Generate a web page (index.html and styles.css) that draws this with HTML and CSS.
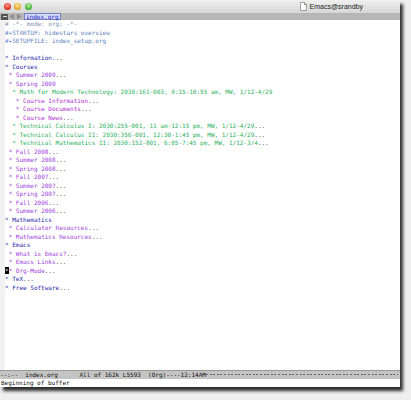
FILE: index.html
```html
<!DOCTYPE html>
<html>
<head>
<meta charset="utf-8">
<link rel="stylesheet" href="styles.css">
</head>
<body>
<div class="window">
  <div class="titlebar">
    <div class="lights">
      <span class="light red"></span>
      <span class="light yellow"></span>
      <span class="light green"></span>
    </div>
    <div class="title">
      <svg class="docicon" width="7" height="9" viewBox="0 0 7 9"><path d="M0.5 0.5 H4.5 L6.5 2.5 V8.5 H0.5 Z" fill="#fff" stroke="#888" stroke-width="0.8"/><path d="M4.5 0.5 V2.5 H6.5" fill="none" stroke="#888" stroke-width="0.8"/></svg>
      <span>Emacs@srandby</span>
    </div>
  </div>
  <div class="tabbar">
    <span class="tbtn minus"></span>
    <svg class="arrow" width="6" height="7" viewBox="0 0 6 7"><path d="M5 0.5 V6.5 L0.5 3.5 Z" fill="#8c8c8c"/></svg>
    <svg class="arrow" width="6" height="7" viewBox="0 0 6 7"><path d="M1 0.5 V6.5 L5.5 3.5 Z" fill="#8c8c8c"/></svg>
    <span class="tab">index.org</span>
  </div>
  <div class="main">
    <div class="fringe"></div>
    <div class="buffer">
<div class="ln cm"># -*- mode: org; -*-</div>
<div class="ln kw">#+STARTUP: hidestars overview</div>
<div class="ln kw">#+SETUPFILE: index_setup.org</div>
<div class="ln"> </div>
<div class="ln l1">* Information<span class="el">...</span></div>
<div class="ln l1">* Courses</div>
<div class="ln l2"><span class="h">*</span>* Summer 2009<span class="el">...</span></div>
<div class="ln l2"><span class="h">*</span>* Spring 2009</div>
<div class="ln l3"><span class="h">**</span>* Math for Modern Technology: 2030:161-003, 9:15-10:55 am, MW, 1/12-4/29</div>
<div class="ln l4"><span class="h">***</span>* Course Information<span class="el">...</span></div>
<div class="ln l4"><span class="h">***</span>* Course Documents<span class="el">...</span></div>
<div class="ln l4"><span class="h">***</span>* Course News<span class="el">...</span></div>
<div class="ln l3"><span class="h">**</span>* Technical Calculus I: 2030:255-001, 11 am-12:15 pm, MW, 1/12-4/29<span class="el">...</span></div>
<div class="ln l3"><span class="h">**</span>* Technical Calculus II: 2030:356-001, 12:30-1:45 pm, MW, 1/12-4/29<span class="el">...</span></div>
<div class="ln l3"><span class="h">**</span>* Technical Mathematics II: 2030:152-801, 6:05-7:45 pm, MW, 1/12-3/4<span class="el">...</span></div>
<div class="ln l2"><span class="h">*</span>* Fall 2008<span class="el">...</span></div>
<div class="ln l2"><span class="h">*</span>* Summer 2008<span class="el">...</span></div>
<div class="ln l2"><span class="h">*</span>* Spring 2008<span class="el">...</span></div>
<div class="ln l2"><span class="h">*</span>* Fall 2007<span class="el">...</span></div>
<div class="ln l2"><span class="h">*</span>* Summer 2007<span class="el">...</span></div>
<div class="ln l2"><span class="h">*</span>* Spring 2007<span class="el">...</span></div>
<div class="ln l2"><span class="h">*</span>* Fall 2006<span class="el">...</span></div>
<div class="ln l2"><span class="h">*</span>* Summer 2006<span class="el">...</span></div>
<div class="ln l1">* Mathematics</div>
<div class="ln l2"><span class="h">*</span>* Calculator Resources<span class="el">...</span></div>
<div class="ln l2"><span class="h">*</span>* Mathematics Resources<span class="el">...</span></div>
<div class="ln l1">* Emacs</div>
<div class="ln l2"><span class="h">*</span>* What is Emacs?<span class="el">...</span></div>
<div class="ln l2"><span class="h">*</span>* Emacs Links<span class="el">...</span></div>
<div class="ln l2"><span class="cursor">*</span>* Org-Mode<span class="el">...</span></div>
<div class="ln l1">* TeX<span class="el">...</span></div>
<div class="ln l1">* Free Software<span class="el">...</span></div>
    </div>
  </div>
  <div class="modeline"><span class="mltext">--:--  index.org      All of 162k L5593  (Org)----12:14AM</span><span class="dashes"></span></div>
  <div class="echo">Beginning of buffer</div>
</div>
</body>
</html>
```

FILE: styles.css
```css
html, body {
  margin: 0;
  padding: 0;
}
body {
  width: 411px;
  height: 400px;
  overflow: hidden;
  background: #efefef;
}
.window {
  width: 400px;
  height: 387px;
  display: flex;
  flex-direction: column;
  background: #fff;
  box-shadow: 3px 4px 3px rgba(0, 0, 0, 0.8);
  overflow: hidden;
}
.titlebar {
  height: 13px;
  flex: none;
  display: flex;
  align-items: center;
  justify-content: space-between;
  background: linear-gradient(#f0f0f0, #d6d6d6);
}
.lights {
  display: flex;
  gap: 3.5px;
  padding-left: 3.5px;
}
.light {
  width: 7px;
  height: 7px;
  border-radius: 50%;
  display: block;
}
.red { background: radial-gradient(circle at 50% 35%, #ff9a8c, #d8291b 70%, #9c1a10); }
.yellow { background: radial-gradient(circle at 50% 35%, #ffe49a, #e4a323 70%, #a66e10); }
.green { background: radial-gradient(circle at 50% 35%, #b7f0a0, #3fae2e 70%, #287a1c); }
.title {
  display: flex;
  align-items: center;
  gap: 3px;
  padding-right: 37px;
  font: 7px "Liberation Sans", Arial, sans-serif;
  color: #222;
}
.docicon { display: block; }
.tabbar {
  height: 7px;
  flex: none;
  display: flex;
  align-items: center;
  gap: 1px;
  background: #b6b6b6;
  padding-left: 1px;
}
.tbtn.minus {
  width: 7px;
  height: 6px;
  background: #555;
  position: relative;
}
.tbtn.minus::after {
  content: "";
  position: absolute;
  left: 1.5px;
  right: 1.5px;
  top: 2.5px;
  height: 1px;
  background: #ddd;
}
.arrow { display: block; }
.tab {
  height: 7px;
  box-sizing: border-box;
  margin-left: 1px;
  padding: 0 1px;
  background: #d8dcf8;
  border: 0.5px solid #7080c0;
  font: 6px/6px "DejaVu Sans Mono", monospace;
  color: #1a22c8;
}
.main {
  flex: 1;
  display: flex;
  min-height: 0;
}
.fringe {
  width: 5px;
  background: #f2f2f2;
  flex: none;
}
.buffer {
  flex: 1;
  font: 6px/8.5px "DejaVu Sans Mono", monospace;
  overflow: hidden;
}
.ln {
  white-space: pre;
  height: 8.5px;
}
.cm { color: #7c8fb0; }
.kw { color: #5f7fbf; }
.l1 { color: #2424a8; }
.l2 { color: #a040e0; }
.l3 { color: #2cb060; }
.l4 { color: #b030d0; }
.el { color: #444; }
.h { color: #fff; }
.cursor {
  background: #000;
  color: #fff;
}
.modeline {
  height: 8px;
  flex: none;
  display: flex;
  align-items: center;
  background: #c4c4c4;
  border-top: 0.5px solid #999;
  font: 6px/8px "DejaVu Sans Mono", monospace;
  color: #111;
  white-space: pre;
}
.mltext { flex: none; }
.dashes {
  flex: 1;
  height: 1px;
  margin-right: 2px;
  background: repeating-linear-gradient(to right, #666 0 2px, transparent 2px 3.6px);
}
.echo {
  height: 8.5px;
  flex: none;
  font: 6px/8.5px "DejaVu Sans Mono", monospace;
  color: #111;
  white-space: pre;
  padding-left: 1px;
}
```
